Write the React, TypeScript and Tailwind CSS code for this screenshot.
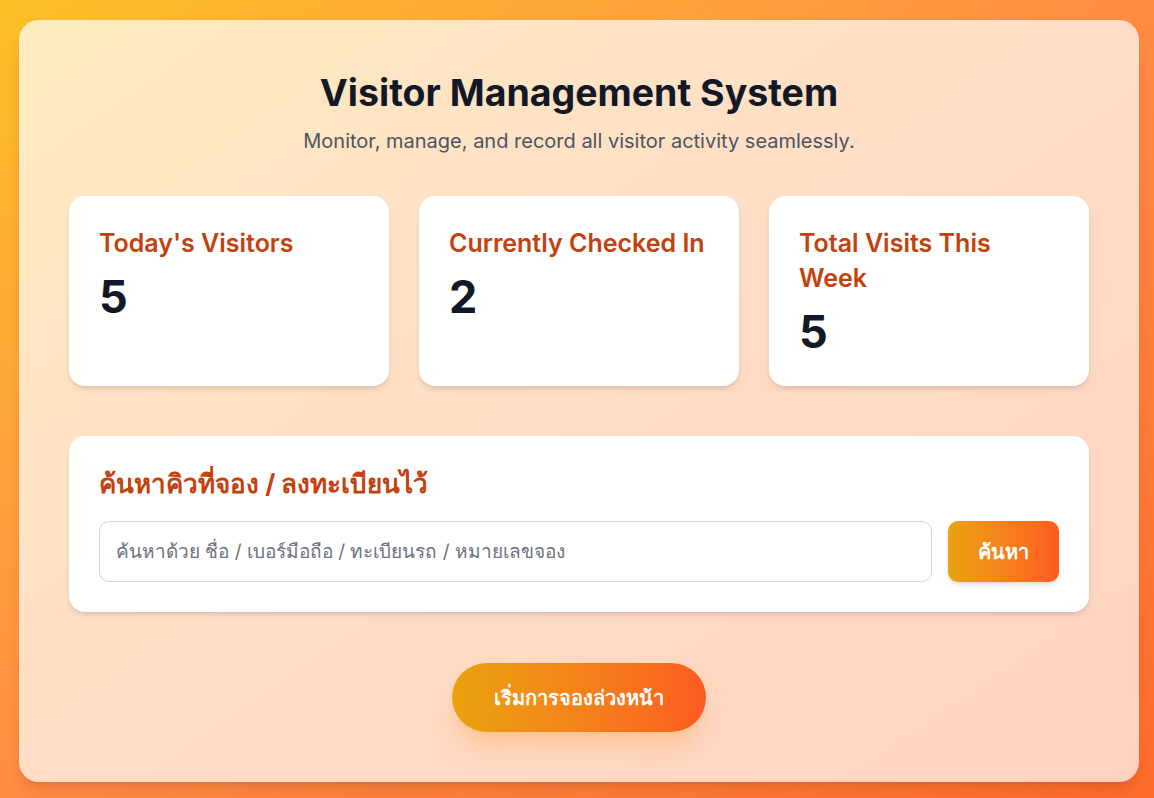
const stats = [
  { label: "Today's Visitors", value: 5 },
  { label: "Currently Checked In", value: 2 },
  { label: "Total Visits This Week", value: 5 },
];

export default function App() {
  return (
    <div
      className="min-h-[798px] bg-gradient-to-br from-[#fbbf24] via-[#ff8c42] to-[#ff6a2a] pl-[19px] pt-5 pb-[17px]"
      style={{ fontFamily: 'Inter, "Noto Sans", sans-serif' }}
    >
      <div className="w-[1120px] rounded-[20px] bg-white/70 px-[50px] pt-[50px] pb-[50px] shadow-lg">
        <h1 className="text-center text-[37.5px] leading-[46px] font-bold text-[#111827]">
          Visitor Management System
        </h1>
        <p className="mt-[11px] text-center text-[20px] leading-7 text-[#4b5563]">
          Monitor, manage, and record all visitor activity seamlessly.
        </p>

        <div className="mt-[41px] grid grid-cols-3 gap-[30px]">
          {stats.map((s) => (
            <div key={s.label} className="rounded-2xl bg-white p-[30px] shadow-md">
              <div className="text-[25px] leading-[35px] font-semibold text-[#c2410c]">{s.label}</div>
              <div className="mt-3 text-[45px] leading-[48px] font-bold text-[#111827]">{s.value}</div>
            </div>
          ))}
        </div>

        <div className="mt-[50px] rounded-2xl bg-white p-[30px] shadow-md">
          <h2 className="text-[26px] leading-9 font-bold text-[#c2410c]">ค้นหาคิวที่จอง / ลงทะเบียนไว้</h2>
          <div className="mt-[19px] flex gap-4">
            <input
              className="h-[61px] flex-1 rounded-[10px] border border-[#d1d5db] px-4 text-[19px] text-gray-700 placeholder:text-[#6b7280] outline-none"
              placeholder="ค้นหาด้วย ชื่อ / เบอร์มือถือ / ทะเบียนรถ / หมายเลขจอง"
            />
            <button className="h-[61px] w-[111px] rounded-[10px] bg-gradient-to-r from-[#e9a20e] to-[#fd5b20] text-[20px] font-bold text-white shadow-md">
              ค้นหา
            </button>
          </div>
        </div>

        <div className="mt-[51px] flex justify-center">
          <button className="h-[69px] w-[254px] rounded-full bg-gradient-to-r from-[#e9a20e] to-[#fd5b20] text-[20px] font-bold text-white shadow-xl shadow-[#fdba74]/50">
            เริ่มการจองล่วงหน้า
          </button>
        </div>
      </div>
    </div>
  );
}
